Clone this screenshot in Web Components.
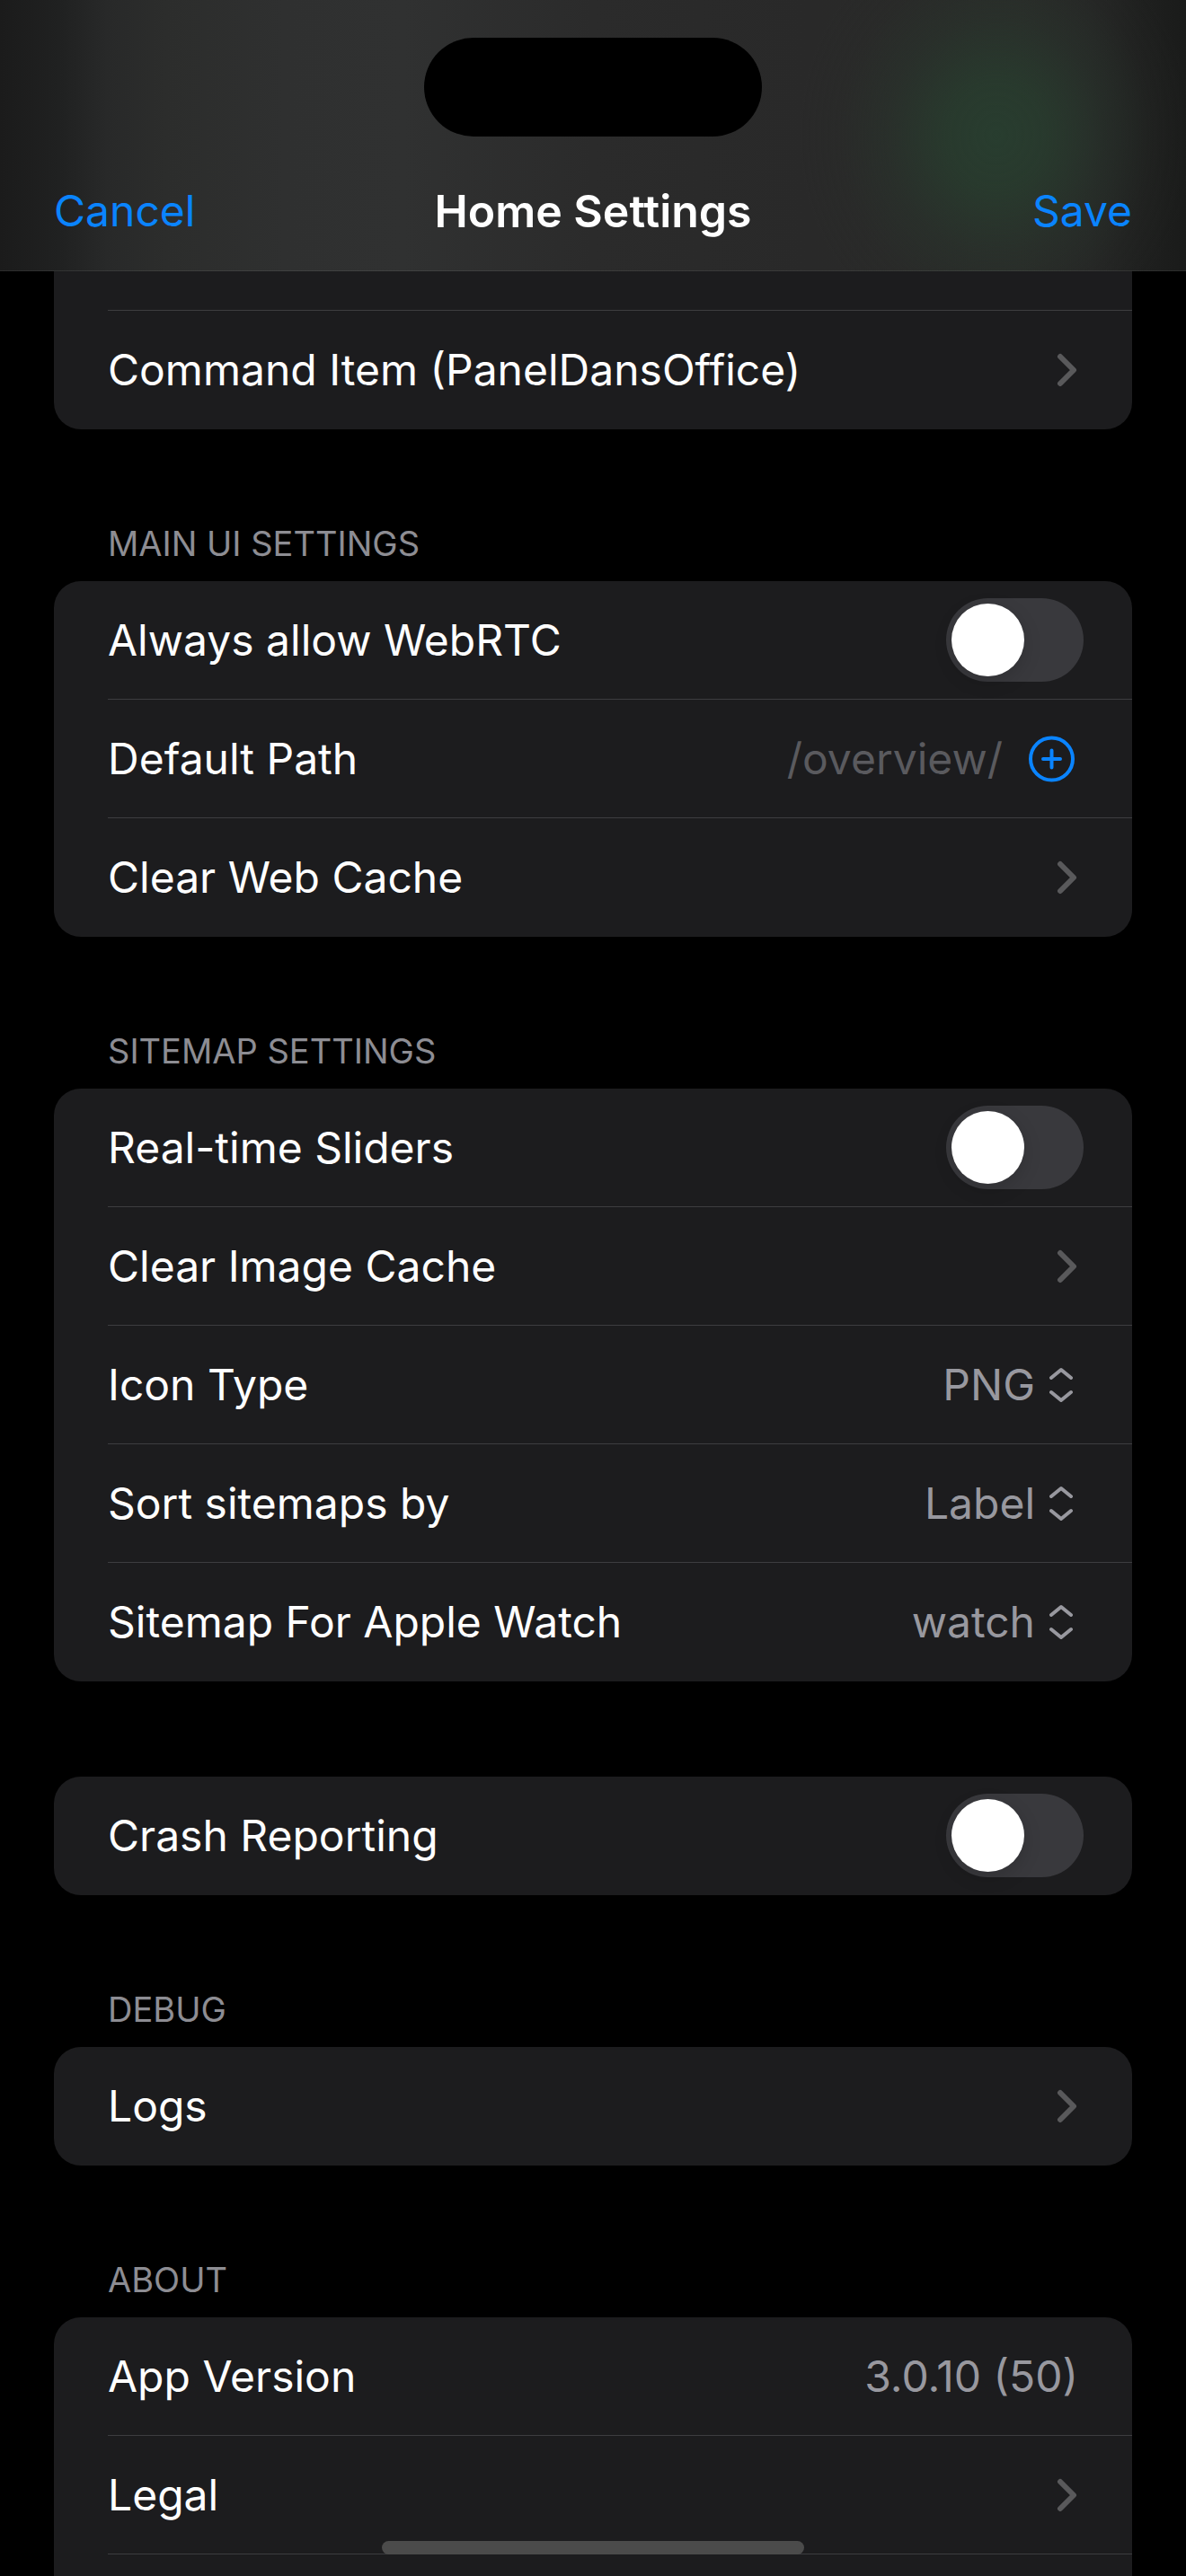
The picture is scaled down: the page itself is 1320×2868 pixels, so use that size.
<!DOCTYPE html>
<html lang="en">
<head>
<meta charset="utf-8">
<meta name="viewport" content="width=device-width, initial-scale=1">
<title>Home Settings</title>
<style>
  :root {
    --page: #000;
    --card: #1c1c1e;
    --line: #3d3d40;
    --label: #fff;
    --value: #98989f;
    --dim: #5a5a5e;
    --muted: #8d8d93;
    --tint: #0a84ff;
    --title-size: 50px;
    --body-size: 48px;
    --caption-size: 38px;
  }
  body {
    margin: 0;
    background: var(--page);
    color: var(--label);
    font-family: Inter, "Liberation Sans", sans-serif;
    font-size: var(--body-size);
  }
</style>
</head>
<body>
<settings-screen>
  <nav-header slot="header">
    <span slot="leading">Cancel</span>
    Home Settings
    <span slot="trailing">Save</span>
  </nav-header>

  <settings-group continues="up">
    <value-row partial></value-row>
    <link-row>Command Item (PanelDansOffice)</link-row>
  </settings-group>

  <settings-group heading="MAIN UI SETTINGS">
    <toggle-row>Always allow WebRTC</toggle-row>
    <path-row placeholder="/overview/">Default Path</path-row>
    <link-row>Clear Web Cache</link-row>
  </settings-group>

  <settings-group heading="SITEMAP SETTINGS">
    <toggle-row>Real-time Sliders</toggle-row>
    <link-row>Clear Image Cache</link-row>
    <picker-row value="PNG">Icon Type</picker-row>
    <picker-row value="Label">Sort sitemaps by</picker-row>
    <picker-row value="watch">Sitemap For Apple Watch</picker-row>
  </settings-group>

  <settings-group>
    <toggle-row>Crash Reporting</toggle-row>
  </settings-group>

  <settings-group heading="DEBUG">
    <link-row>Logs</link-row>
  </settings-group>

  <settings-group heading="ABOUT" continues="down">
    <value-row value="3.0.10 (50)">App Version</value-row>
    <link-row divided>Legal</link-row>
  </settings-group>
</settings-screen>

<script>
// Screen: header on top, groups below, home indicator over the bottom edge.
class SettingsScreen extends HTMLElement {
  constructor() {
    super();
    this.attachShadow({ mode: 'open' });
    this.shadowRoot.innerHTML = `
      <style>
        :host {
          display: flex;
          flex-direction: column;
          height: 100vh;
          overflow: hidden;
        }
        main {
          flex: 1;
          min-height: 0;
          display: flex;
          flex-direction: column;
          gap: 106px;
          padding: 0 60px;
          overflow: hidden;
        }
        .home-indicator {
          position: fixed;
          bottom: 24px;
          left: 50%;
          transform: translateX(-50%);
          width: 470px;
          height: 15px;
          border-radius: 8px;
          background: #4b4b4b;
        }
      </style>
      <slot name="header"></slot>
      <main><slot></slot></main>
      <div class="home-indicator"></div>
    `;
  }
}

class NavHeader extends HTMLElement {
  constructor() {
    super();
    this.attachShadow({ mode: 'open' });
    this.shadowRoot.innerHTML = `
      <style>
        :host {
          display: block;
          flex: none;
          border-bottom: 1px solid rgba(255, 255, 255, 0.08);
          background:
            radial-gradient(ellipse 220px 240px at 84% 50%, rgba(40, 61, 47, 1) 0%, rgba(40, 60, 46, 0.85) 25%, rgba(41, 54, 45, 0.45) 55%, rgba(42, 46, 42, 0.15) 80%, rgba(42, 44, 42, 0) 100%),
            linear-gradient(90deg, #1b1b1b 0%, #202121 5%, #282929 9%, #2c2d2c 14%, #2f3030 24%, #303131 34%, #2b2b2b 50%, #292929 68%, #292a28 86%, #252625 92%, #1f201f 96%, #1a1b1a 100%);
        }
        .status {
          display: flex;
          justify-content: center;
          padding: 42px 0 16px;
        }
        .island {
          width: 376px;
          height: 110px;
          border-radius: 55px;
          background: #000;
        }
        nav {
          display: grid;
          grid-template-columns: 1fr auto 1fr;
          align-items: center;
          height: 133px;
          padding: 0 60px;
        }
        h1 {
          margin: 0;
          font-size: var(--title-size);
          font-weight: 600;
        }
        button {
          justify-self: start;
          padding: 0;
          border: 0;
          background: none;
          color: var(--tint);
          font: inherit;
          cursor: pointer;
        }
        button:last-child {
          justify-self: end;
        }
      </style>
      <div class="status"><div class="island"></div></div>
      <nav>
        <button type="button"><slot name="leading"></slot></button>
        <h1><slot></slot></h1>
        <button type="button"><slot name="trailing"></slot></button>
      </nav>
    `;
  }
}

// Card with an optional heading. continues="up|down" leaves that side open.
class SettingsGroup extends HTMLElement {
  constructor() {
    super();
    this.attachShadow({ mode: 'open' });
    this.shadowRoot.innerHTML = `
      <style>
        :host {
          display: block;
          flex: none;
        }
        h2 {
          margin: 0;
          padding: 0 60px 20px;
          color: var(--muted);
          font-size: var(--caption-size);
          font-weight: 400;
          line-height: 43px;
        }
        .card {
          border-radius: 30px;
          background: var(--card);
          overflow: hidden;
        }
        :host([continues="up"]) .card {
          border-top-left-radius: 0;
          border-top-right-radius: 0;
        }
        :host([continues="down"]) {
          flex: 1 0 auto;
          display: flex;
          flex-direction: column;
        }
        :host([continues="down"]) .card {
          flex: 1;
          border-bottom-left-radius: 0;
          border-bottom-right-radius: 0;
        }
      </style>
      <div class="card"><slot></slot></div>
    `;
  }

  connectedCallback() {
    const heading = this.getAttribute('heading');
    if (heading && !this.shadowRoot.querySelector('h2')) {
      const h2 = document.createElement('h2');
      h2.textContent = heading;
      this.shadowRoot.querySelector('.card').before(h2);
    }
  }
}

const rowStyles = `
  :host {
    display: block;
    padding-left: 60px;
  }
  .row {
    display: flex;
    align-items: center;
    gap: 16px;
    box-sizing: border-box;
    height: 132px;
    padding-right: 60px;
    border-bottom: 1px solid var(--line);
    color: inherit;
    text-decoration: none;
  }
  :host(:last-child:not([divided])) .row {
    border-bottom-color: transparent;
  }
  .text {
    flex: 1;
    white-space: nowrap;
  }
  svg {
    display: block;
    flex: none;
    fill: none;
    stroke: currentColor;
    stroke-linecap: round;
    stroke-linejoin: round;
  }
`;

class BaseRow extends HTMLElement {
  constructor() {
    super();
    this.attachShadow({ mode: 'open' });
    this.shadowRoot.innerHTML = `<style>${rowStyles}${this.styles()}</style>${this.markup()}`;
  }

  styles() {
    return '';
  }

  markup() {
    return '';
  }
}

class LinkRow extends BaseRow {
  styles() {
    return `
      svg {
        color: #59595b;
        stroke-width: 6;
      }
    `;
  }

  markup() {
    return `
      <a class="row" href="#">
        <span class="text"><slot></slot></span>
        <svg width="24" height="40" viewBox="0 0 24 40" aria-hidden="true">
          <path d="M4 5 L19 20 L4 35"/>
        </svg>
      </a>
    `;
  }
}

class ToggleRow extends BaseRow {
  styles() {
    return `
      .row {
        padding-right: 54px;
      }
      input {
        appearance: none;
        flex: none;
        display: flex;
        box-sizing: border-box;
        width: 153px;
        height: 93px;
        margin: 0;
        padding: 6px;
        border-radius: 47px;
        background: #39393d;
        cursor: pointer;
      }
      input::before {
        content: "";
        width: 81px;
        height: 81px;
        border-radius: 50%;
        background: #fff;
        box-shadow: 0 6px 20px rgba(0, 0, 0, 0.15);
      }
      input:checked {
        justify-content: flex-end;
        background: #30d158;
      }
    `;
  }

  markup() {
    return `
      <div class="row">
        <label class="text" for="toggle"><slot></slot></label>
        <input type="checkbox" role="switch" id="toggle">
      </div>
    `;
  }
}

class PathRow extends BaseRow {
  styles() {
    return `
      .row {
        gap: 28px;
      }
      .text {
        flex: none;
      }
      input {
        flex: 1;
        min-width: 0;
        padding: 0;
        border: 0;
        outline: 0;
        background: none;
        color: var(--value);
        font: inherit;
        text-align: right;
      }
      input::placeholder {
        color: var(--dim);
        opacity: 1;
      }
      button {
        padding: 0;
        border: 0;
        background: none;
        color: var(--tint);
        cursor: pointer;
      }
      svg {
        stroke-width: 4;
      }
    `;
  }

  markup() {
    return `
      <div class="row">
        <label class="text" for="path"><slot></slot></label>
        <input type="text" id="path">
        <button type="button" aria-label="Use current path">
          <svg width="56" height="52" viewBox="0 0 56 52" aria-hidden="true">
            <circle cx="26.5" cy="26" r="23.5"/>
            <path d="M26.5 16.5 V35.5 M17 26 H36"/>
          </svg>
        </button>
      </div>
    `;
  }

  connectedCallback() {
    this.shadowRoot.querySelector('input').placeholder = this.getAttribute('placeholder') || '';
  }
}

class PickerRow extends BaseRow {
  styles() {
    return `
      .row {
        color: var(--value);
      }
      .text {
        color: var(--label);
      }
      select {
        appearance: none;
        padding: 0;
        border: 0;
        background: none;
        color: inherit;
        font: inherit;
        text-align-last: right;
        cursor: pointer;
      }
      svg {
        stroke-width: 4;
      }
    `;
  }

  markup() {
    return `
      <div class="row">
        <label class="text" for="picker"><slot></slot></label>
        <select id="picker"></select>
        <svg width="32" height="40" viewBox="0 0 32 40" aria-hidden="true">
          <path d="M2 12 L13 3 L24 12 M2 28 L13 37 L24 28"/>
        </svg>
      </div>
    `;
  }

  connectedCallback() {
    const select = this.shadowRoot.querySelector('select');
    if (!select.options.length) {
      select.add(new Option(this.getAttribute('value')));
    }
  }
}

class ValueRow extends BaseRow {
  styles() {
    return `
      :host([partial]) .row {
        height: 44px;
      }
      .value {
        color: var(--value);
      }
    `;
  }

  markup() {
    return `
      <div class="row">
        <span class="text"><slot></slot></span>
        <span class="value"></span>
      </div>
    `;
  }

  connectedCallback() {
    this.shadowRoot.querySelector('.value').textContent = this.getAttribute('value') || '';
  }
}

customElements.define('settings-screen', SettingsScreen);
customElements.define('nav-header', NavHeader);
customElements.define('settings-group', SettingsGroup);
customElements.define('link-row', LinkRow);
customElements.define('toggle-row', ToggleRow);
customElements.define('path-row', PathRow);
customElements.define('picker-row', PickerRow);
customElements.define('value-row', ValueRow);
</script>
</body>
</html>
